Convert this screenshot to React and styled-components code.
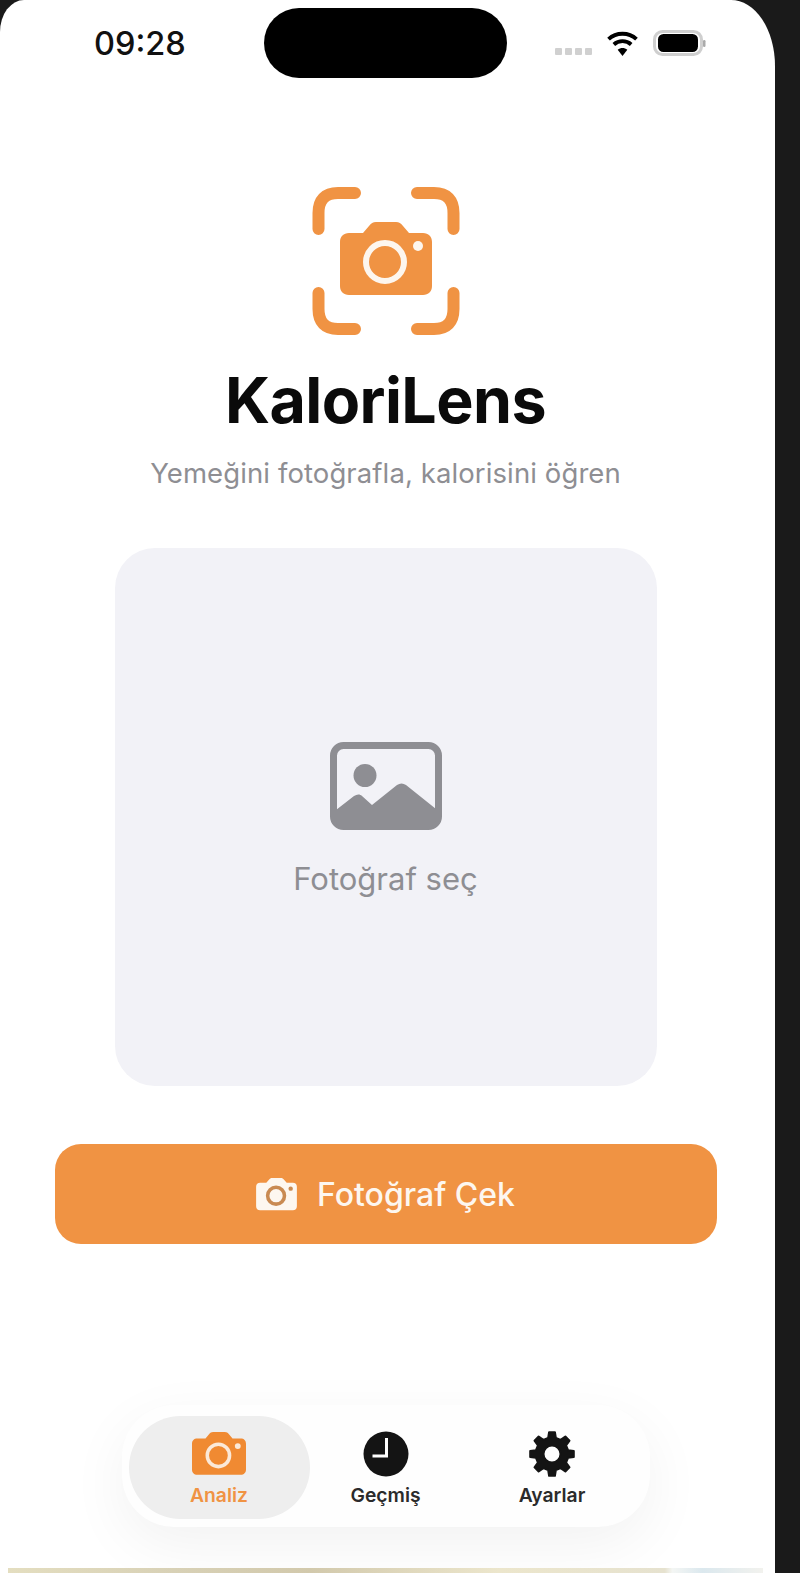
import React from "react";
import styled, { createGlobalStyle } from "styled-components";

const Global = createGlobalStyle`
  html, body { margin: 0; padding: 0; background: #1a1a1a; }
  body { font-family: Inter, "Noto Sans", sans-serif; }
`;
const Page = styled.div`
  width: 800px; height: 1573px; overflow: hidden; background: #1a1a1a; position: relative;
`;
const Phone = styled.div`
  width: 775px; height: 1573px; background: #fff; overflow: hidden; box-sizing: border-box; padding-right: 4px;
  border-radius: 24px 44px 0 0 / 32px 66px 0 0; display: flex; flex-direction: column; align-items: center;
`;
const StatusBar = styled.div`
  width: 100%; height: 79px; padding-top: 8px; box-sizing: border-box;
  display: grid; grid-template-columns: 264px 243px 1fr; flex: none;
`;
const Time = styled.div`
  font-size: 32.5px; font-weight: 500; color: #111; line-height: 72px; padding-left: 94px;
`;
const Island = styled.div`
  width: 243px; height: 70px; background: #000; border-radius: 35px;
`;
const StatusIcons = styled.div`
  display: flex; align-items: center; padding-left: 48px; height: 70px;
`;
const Dots = styled.div`
  display: flex; gap: 3px; margin-top: 17px; margin-right: 14px;
`;
const Dot = styled.span`
  width: 7px; height: 7px; background: #d0d0d0; border-radius: 1px;
`;
const Logo = styled.svg`
  width: 150px; height: 150px; margin-top: 107px; flex: none; display: block;
`;
const Title = styled.h1`
  margin: 27px 0 0; font-size: 62.7px; line-height: 74px; font-weight: 700; color: #0a0a0a; letter-spacing: -0.6px;
`;
const Subtitle = styled.p`
  margin: 20px 0 0; font-size: 27.5px; line-height: 32px; color: #8e8e93; font-weight: 400; letter-spacing: 0.1px;
`;
const PickPanel = styled.div`
  width: 542px; height: 538px; margin-top: 59px; flex: none; background: #f2f2f7; border-radius: 40px;
  display: flex; flex-direction: column; align-items: center; justify-content: center;
`;
const PickIcon = styled.svg`
  width: 112px; height: 88px; margin-top: 6px; flex: none;
`;
const PickLabel = styled.div`
  margin-top: 30px; font-size: 31px; line-height: 38px; color: #8e8e93;
`;
const Action = styled.button`
  width: 662px; height: 100px; margin-top: 58px; flex: none; border: 0; border-radius: 26px; background: #f09343;
  color: #fdf7f0; font: 500 32px Inter, sans-serif; display: flex; align-items: center; justify-content: center; gap: 20px;
`;
const TabWrap = styled.nav`
  width: 528px; height: 122px; margin-top: 161px; flex: none; background: #fefefe; border-radius: 52px;
  box-shadow: 0 18px 60px rgba(0,0,0,0.055); box-sizing: border-box; padding: 11px 7px;
  display: grid; grid-template-columns: 181px 152px 1fr;
`;
const Tab = styled.div`
  display: flex; flex-direction: column; align-items: center; height: 103px;
  box-sizing: border-box; padding-top: ${p => p.$top}px; border-radius: 52px;
  background: ${p => (p.$active ? "#eeeeee" : "transparent")};
`;
const TabLabel = styled.span`
  font-size: 19.3px; line-height: 22px; font-weight: 600; margin-top: ${p => p.$gap}px;
  color: ${p => (p.$active ? "#f09343" : "#2b2b2b")};
`;
const Strip = styled.div`
  position: absolute; left: 8px; top: 1568px; width: 755px; height: 5px;
  background: linear-gradient(90deg, #e4dec0, #d8d1b6 22%, #d2c9ac 40%, #ece6cc 65%, #e6e2cf 87%, #f4f6f4 88%, #dbe8ee 92%, #f2f2ee 100%);
`;

function CameraGlyph({ x, y, w, color, ring, ringWidth = 6 }) {
  const s = w / 92;
  return (
    <g transform={`translate(${x} ${y}) scale(${s})`}>
      <path fill={color} d="M9 11h14l6-7c2-2.500 4-4 7-4h20c3 0 5 1.500 7 4l6 7h14c5.500 0 9 3.500 9 9v44c0 5.500-3.500 9-9 9H9c-5.500 0-9-3.500-9-9V20c0-5.500 3.500-9 9-9z" />
      <circle cx="45" cy="40" r="19" fill="none" stroke={ring} strokeWidth={ringWidth} />
      <circle cx="78" cy="24" r="5" fill={ring} />
    </g>
  );
}

function gearPath(cx, cy, teeth, outer, inner, hole) {
  const pts = [];
  const step = (Math.PI * 2) / teeth;
  for (let i = 0; i < teeth; i++) {
    const a = i * step - Math.PI / 2;
    const corners = [
      [inner, a - step * 0.3],
      [outer, a - step * 0.17],
      [outer, a + step * 0.17],
      [inner, a + step * 0.3],
    ];
    corners.forEach(([r, t]) => pts.push(`${(cx + r * Math.cos(t)).toFixed(2)} ${(cy + r * Math.sin(t)).toFixed(2)}`));
  }
  const ring = `M${cx - hole} ${cy}a${hole} ${hole} 0 1 0 ${hole * 2} 0a${hole} ${hole} 0 1 0 ${-hole * 2} 0z`;
  return `M${pts.join("L")}z${ring}`;
}

export default function App() {
  return (
    <Page>
      <Global />
      <Phone>
        <StatusBar>
          <Time>09:28</Time>
          <Island />
          <StatusIcons>
            <Dots><Dot /><Dot /><Dot /><Dot /></Dots>
            <svg width="33" height="26" viewBox="0 0 34 27">
              <path d="M2.500 9.500C10.500 2 23.500 2 31.500 9.500M8 15C13 10.500 21 10.500 26 15" fill="none" stroke="#000" strokeWidth="4" />
              <path d="M12 20.500c3-2.500 7-2.500 10 0L17 27z" fill="#000" />
            </svg>
            <svg width="54" height="28" viewBox="0 0 54 28" style={{ marginLeft: 14 }}>
              <rect x="1.500" y="2.500" width="47" height="23" rx="8" fill="none" stroke="#cfcfcf" strokeWidth="3" />
              <rect x="5" y="5" width="40" height="18" rx="5.500" fill="#000" />
              <rect x="50" y="11" width="2.500" height="7" rx="1.200" fill="#aaa" />
            </svg>
          </StatusIcons>
        </StatusBar>
        <Logo viewBox="0 0 150 150">
          <path d="M7.500 43V27C7.500 14 14 7 27 7H44M106 7H123C136 7 142.500 14 142.500 27V43M7.500 107V123C7.500 136 14 143 27 143H44M142.500 107V123C142.500 136 136 143 123 143H106" fill="none" stroke="#f09343" strokeWidth="12" strokeLinecap="round" />
          <CameraGlyph x={29} y={36} w={92} color="#f09343" ring="#fdf6ee" />
        </Logo>
        <Title>KaloriLens</Title>
        <Subtitle>Yemeğini fotoğrafla, kalorisini öğren</Subtitle>
        <PickPanel>
          <PickIcon viewBox="0 0 112 88">
            <rect x="3.500" y="3.500" width="105" height="81" rx="10" fill="none" stroke="#8e8e93" strokeWidth="7" />
            <circle cx="35" cy="33.500" r="11.500" fill="#8e8e93" />
            <path d="M6 68L24 54c3-2 6-2 8 0l10 9 25-20c3-2 6-2 9 0l30 24v12c0 3-2 5-5 5H11c-3 0-5-2-5-5z" fill="#8e8e93" />
          </PickIcon>
          <PickLabel>Fotoğraf seç</PickLabel>
        </PickPanel>
        <Action>
          <svg width="41" height="33" viewBox="0 0 42 34">
            <CameraGlyph x={0} y={0} w={42} color="#fdf7f0" ring="#c98a52" ringWidth={8} />
          </svg>
          Fotoğraf Çek
        </Action>
        <TabWrap>
          <Tab $active $top={15}>
            <svg width="56" height="44" viewBox="0 0 56 44">
              <CameraGlyph x={1} y={1} w={54} color="#f08a32" ring="#fbe9d8" />
            </svg>
            <TabLabel $active $gap={9}>Analiz</TabLabel>
          </Tab>
          <Tab $top={15}>
            <svg width="46" height="46" viewBox="0 0 46 46">
              <circle cx="23" cy="23" r="22.500" fill="#141414" />
              <path d="M23.500 7V25H9.500" fill="none" stroke="#fff" strokeWidth="3" />
            </svg>
            <TabLabel $gap={7}>Geçmiş</TabLabel>
          </Tab>
          <Tab $top={14}>
            <svg width="48" height="48" viewBox="0 0 48 48">
              <path fill="#141414" stroke="#141414" strokeWidth="2" strokeLinejoin="round" fillRule="evenodd" d={gearPath(24, 24, 8, 22, 16.500, 8.500)} />
            </svg>
            <TabLabel $gap={6}>Ayarlar</TabLabel>
          </Tab>
        </TabWrap>
      </Phone>
      <Strip />
    </Page>
  );
}
